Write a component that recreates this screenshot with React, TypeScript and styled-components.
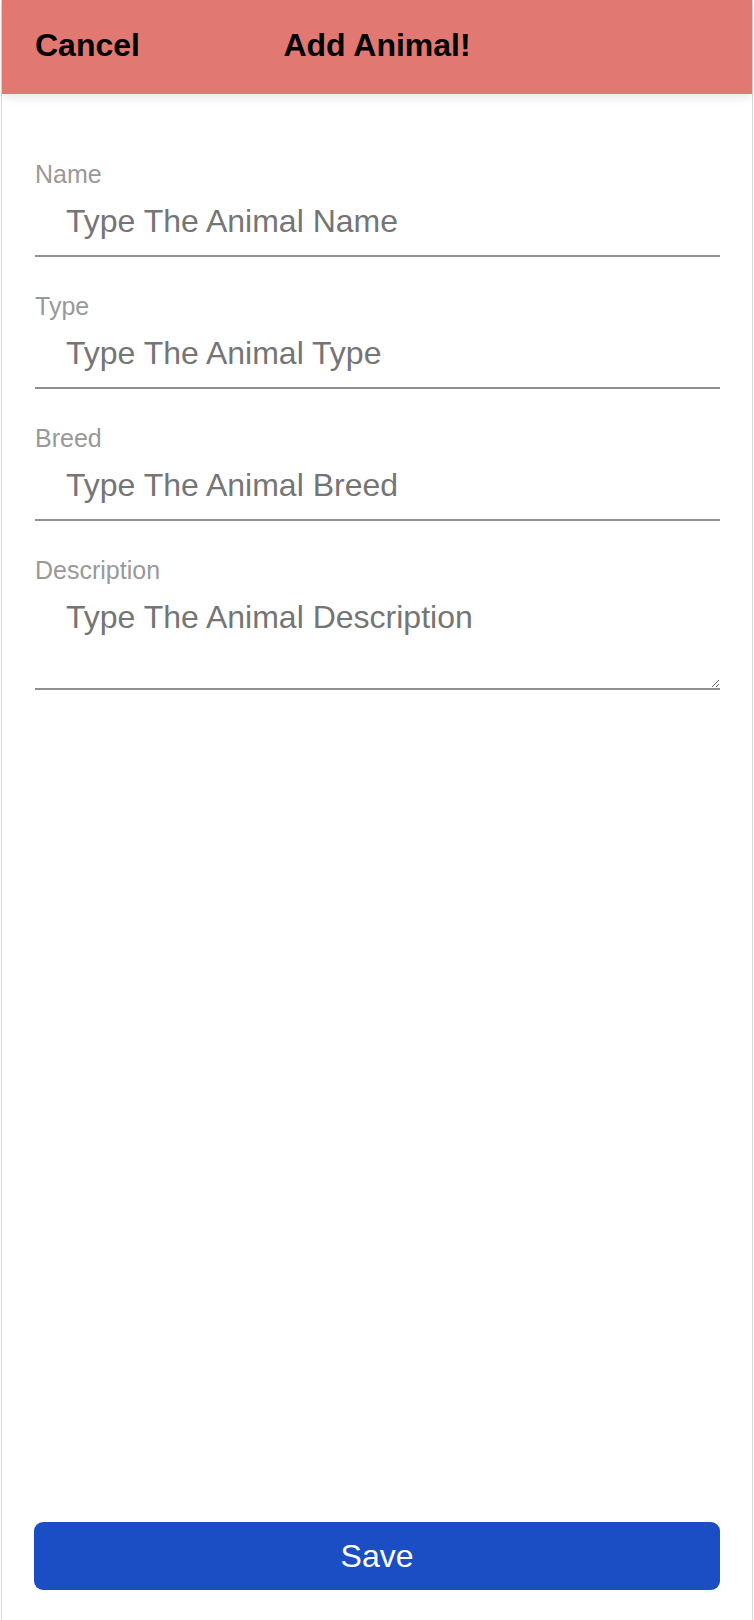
import React from "react";
import styled, { createGlobalStyle } from "styled-components";

const GlobalStyle = createGlobalStyle`
  html, body {
    margin: 0;
    padding: 0;
    background: #ffffff;
  }
  body {
    font-family: "Liberation Sans", Arial, Helvetica, sans-serif;
  }
  * { box-sizing: border-box; }
`;

const Screen = styled.div`
  margin: 0 1px;
  height: 100vh;
  min-height: 1620px;
  border-left: 1px solid #d9d9d9;
  border-right: 1px solid #d9d9d9;
  display: flex;
  flex-direction: column;
  background: #ffffff;
`;

const Header = styled.header`
  height: 94px;
  background: #e17972;
  display: grid;
  grid-template-columns: 1fr auto 1fr;
  align-items: center;
  padding-bottom: 3px;
  box-shadow: 0 3px 10px rgba(0, 0, 0, 0.1);
  position: relative;
  z-index: 1;
`;

const HeaderButton = styled.button`
  justify-self: start;
  background: none;
  border: none;
  padding: 0 0 0 33px;
  font-family: "Liberation Sans", Arial, sans-serif;
  font-weight: 700;
  font-size: 32px;
  color: #000;
  cursor: pointer;
`;

const Title = styled.h1`
  margin: 0;
  font-family: "Liberation Sans", Arial, sans-serif;
  font-weight: 700;
  font-size: 32px;
  color: #000;
`;

const Form = styled.form`
  flex: 1;
  display: flex;
  flex-direction: column;
  padding: 67px 32px 0 33px;
`;

const Field = styled.div`
  display: flex;
  flex-direction: column;
  & + & {
    margin-top: 36px;
  }
`;

const Label = styled.label`
  font-size: 25px;
  line-height: 26px;
  color: #999999;
`;

const Input = styled.input`
  height: 70px;
  border: none;
  border-bottom: 2px solid #8f8f8f;
  padding: 0 0 0 31px;
  font-family: "Liberation Sans", Arial, sans-serif;
  font-size: 32px;
  color: #333;
  outline: none;
  background: transparent;
  &::placeholder {
    color: #757575;
  }
`;

const TextArea = styled.textarea`
  height: 107px;
  border: none;
  border-bottom: 2px solid #8f8f8f;
  padding: 16px 0 0 31px;
  font-family: "Liberation Sans", Arial, sans-serif;
  font-size: 32px;
  line-height: 37px;
  color: #333;
  outline: none;
  background: transparent;
  resize: vertical;
  &::placeholder {
    color: #757575;
  }
`;

const Footer = styled.div`
  padding: 0 32px 30px 32px;
`;

const SaveButton = styled.button`
  width: 100%;
  height: 68px;
  border: none;
  border-radius: 9px;
  background: #1b4ec4;
  color: #ffffff;
  font-family: "Liberation Sans", Arial, sans-serif;
  font-size: 32px;
  cursor: pointer;
`;

const fields = [
  { id: "name", label: "Name", placeholder: "Type The Animal Name" },
  { id: "type", label: "Type", placeholder: "Type The Animal Type" },
  { id: "breed", label: "Breed", placeholder: "Type The Animal Breed" },
];

export default function App() {
  return (
    <>
      <GlobalStyle />
      <Screen>
        <Header>
          <HeaderButton type="button">Cancel</HeaderButton>
          <Title>Add Animal!</Title>
          <span />
        </Header>
        <Form onSubmit={(e) => e.preventDefault()}>
          {fields.map((f) => (
            <Field key={f.id}>
              <Label htmlFor={f.id}>{f.label}</Label>
              <Input id={f.id} placeholder={f.placeholder} />
            </Field>
          ))}
          <Field>
            <Label htmlFor="description">Description</Label>
            <TextArea id="description" placeholder="Type The Animal Description" />
          </Field>
        </Form>
        <Footer>
          <SaveButton type="button">Save</SaveButton>
        </Footer>
      </Screen>
    </>
  );
}
